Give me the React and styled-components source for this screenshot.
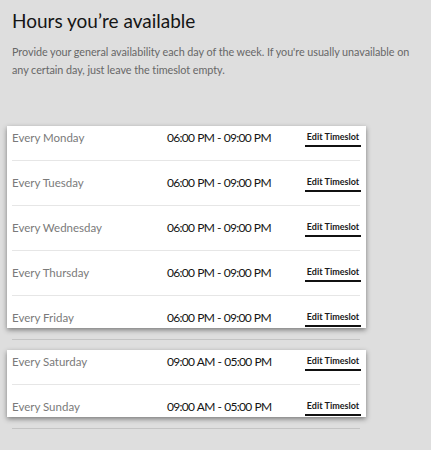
import React from "react";
import styled, { createGlobalStyle } from "styled-components";

const Global = createGlobalStyle`
  html, body { margin: 0; padding: 0; background: #dedede; }
  body { font-family: Lato, "Open Sans", sans-serif; -webkit-font-smoothing: antialiased; }
  * { box-sizing: border-box; }
`;

const Page = styled.div`
  width: 431px;
  min-height: 450px;
  background: #dedede;
  padding: 9px 0 0 7px;
`;

const Header = styled.div`
  padding: 0 10px 0 5px;
`;

const Title = styled.h1`
  margin: 0;
  font-size: 19px;
  line-height: 24px;
  font-weight: 400;
  color: #151515;
`;

const Description = styled.p`
  margin: 10px 0 0;
  font-size: 10.8px;
  line-height: 18px;
  letter-spacing: -0.05px;
  color: #676767;
`;

const List = styled.div`
  width: 359px;
  margin-top: 47px;
`;

const Card = styled.div`
  background: #fff;
  box-shadow: 0 2px 5px rgba(0, 0, 0, 0.45);
`;

const Row = styled.div`
  display: grid;
  grid-template-columns: 155px 1fr 56px;
  align-items: center;
  height: 22px;
  padding: 0 5px;
`;

const Day = styled.span`
  font-size: 11.5px;
  color: #7a7a7a;
`;

const Time = styled.span`
  font-size: 12px;
  color: #141414;
  letter-spacing: -0.7px;
  word-spacing: 0.5px;
`;

const EditLink = styled.a`
  display: block;
  justify-self: end;
  width: 56px;
  text-align: center;
  font-size: 9px;
  font-weight: 700;
  line-height: 12px;
  color: #1a1a1a;
  padding-bottom: 2px;
  border-bottom: 2px solid #111;
  margin-top: 4px;
  text-decoration: none;
  cursor: pointer;
`;

const Divider = styled.div`
  height: 1px;
  margin: ${(p) => (p.$outside ? "11px 6px 10px 5px" : "12px 6px 10px 5px")};
  background: ${(p) => (p.$outside ? "#c4c4c4" : "#e6e6e6")};
`;

const groups = [
  [
    ["Every Monday", "06:00 PM - 09:00 PM"],
    ["Every Tuesday", "06:00 PM - 09:00 PM"],
    ["Every Wednesday", "06:00 PM - 09:00 PM"],
    ["Every Thursday", "06:00 PM - 09:00 PM"],
    ["Every Friday", "06:00 PM - 09:00 PM"],
  ],
  [
    ["Every Saturday", "09:00 AM - 05:00 PM"],
    ["Every Sunday", "09:00 AM - 05:00 PM"],
  ],
];

export default function App() {
  return (
    <Page>
      <Global />
      <Header>
        <Title>Hours you’re available</Title>
        <Description>
          Provide your general availability each day of the week. If you're usually unavailable on
          any certain day, just leave the timeslot empty.
        </Description>
      </Header>
      <List>
        {groups.map((g, gi) => (
          <React.Fragment key={gi}>
            <Card>
              {g.map(([day, time], i) => (
                <React.Fragment key={day}>
                  <Row>
                    <Day>{day}</Day>
                    <Time>{time}</Time>
                    <EditLink>Edit Timeslot</EditLink>
                  </Row>
                  {i < g.length - 1 && <Divider />}
                </React.Fragment>
              ))}
            </Card>
            <Divider $outside />
          </React.Fragment>
        ))}
      </List>
    </Page>
  );
}
